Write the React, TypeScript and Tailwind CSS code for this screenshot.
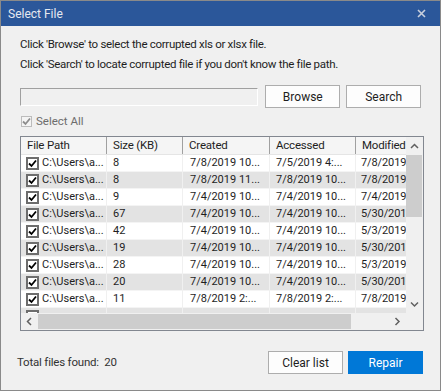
import React from "react"

// "Select File" dialog: instructions, path field, file list with scrollbars.

type Row = { size: string; created: string; accessed: string; modified: string }

const ROWS: Row[] = [
  { size: "8", created: "7/8/2019 10...", accessed: "7/5/2019 4:...", modified: "7/8/2019" },
  { size: "8", created: "7/8/2019 11...", accessed: "7/8/2019 10...", modified: "7/8/2019" },
  { size: "9", created: "7/4/2019 10...", accessed: "7/4/2019 10...", modified: "7/4/2019" },
  { size: "67", created: "7/4/2019 10...", accessed: "7/4/2019 10...", modified: "5/30/201" },
  { size: "42", created: "7/4/2019 10...", accessed: "7/4/2019 10...", modified: "5/3/2019" },
  { size: "19", created: "7/4/2019 10...", accessed: "7/4/2019 10...", modified: "5/30/201" },
  { size: "28", created: "7/4/2019 10...", accessed: "7/4/2019 10...", modified: "5/3/2019" },
  { size: "20", created: "7/4/2019 10...", accessed: "7/4/2019 10...", modified: "5/30/201" },
  { size: "11", created: "7/8/2019 2:...", accessed: "7/8/2019 2:...", modified: "7/8/2019" },
  { size: "", created: "", accessed: "", modified: "" },
]

const COLS = "grid grid-cols-[86px_76px_87px_86px_86px]"

function Check({ color = "#000" }: { color?: string }) {
  return (
    <svg width="9" height="9" viewBox="0 0 9 9">
      <path d="M1 4.5 L3.5 7 L8 1.5" fill="none" stroke={color} strokeWidth="1.8" />
    </svg>
  )
}

function Chevron({ dir }: { dir: "up" | "down" | "left" | "right" }) {
  const d = {
    up: "M1 5 L4.5 1.5 L8 5",
    down: "M1 1.5 L4.5 5 L8 1.5",
    left: "M5 1 L1.5 4.5 L5 8",
    right: "M1.5 1 L5 4.5 L1.5 8",
  }[dir]
  const vertical = dir === "up" || dir === "down"
  return (
    <svg width={vertical ? 9 : 7} height={vertical ? 7 : 9} viewBox={vertical ? "0 0 9 7" : "0 0 7 9"}>
      <path d={d} fill="none" stroke="#606060" strokeWidth="1.5" />
    </svg>
  )
}

export default function App() {
  return (
    <div
      className="flex h-[391px] w-[441px] flex-col border border-[#8a8a8a] bg-[#f0f0f0] text-[11.5px] text-[#1e1e1e]"
      style={{ fontFamily: "Roboto, 'Liberation Sans', sans-serif" }}
    >
      <div className="flex h-[25px] shrink-0 items-center justify-between bg-[#2b579a] pl-[7px] pr-[14px]">
        <span className="text-[12px] text-[#e6e9f0]">Select File</span>
        <svg width="9" height="9" viewBox="0 0 9 9">
          <path d="M1 1 L8 8 M8 1 L1 8" stroke="#c9d0dd" strokeWidth="1.6" />
        </svg>
      </div>

      <div className="flex flex-col px-[19px]">
        <p className="mt-[10px] leading-[16px] tracking-[-0.3px]">Click 'Browse' to select the corrupted xls or xlsx file.</p>
        <p className="mt-[4px] leading-[16px] tracking-[-0.3px]">Click 'Search' to locate corrupted file if you don't know the file path.</p>

        <div className="mt-[13px] flex h-[23px] items-center">
          <div className="h-[18px] w-[239px] border border-b-white border-l-[#a0a0a0] border-r-white border-t-[#a0a0a0] bg-[#f0f0f0]" />
          <button className="ml-[7px] h-[23px] w-[75px] border border-[#adadad] bg-[#fdfdfd] text-[12px]">Browse</button>
          <button className="ml-[6px] h-[23px] w-[75px] border border-[#adadad] bg-[#fdfdfd] text-[12px]">Search</button>
        </div>

        <div className="mt-[6px] flex h-[15px] items-center pl-[1px]">
          <div className="flex h-[11px] w-[11px] items-center justify-center border border-[#bcbcbc] bg-[#f4f4f4]">
            <Check color="#8d8d8d" />
          </div>
          <span className="ml-[4px] text-[#6d6d6d]">Select All</span>
        </div>

        <div className="mt-[7px] flex w-[404px] flex-col border border-[#828790] bg-white">
          <div className="flex h-[176px]">
            <div className="w-[385px] overflow-hidden">
              <div className={`${COLS} h-[18px] w-[421px] border-b border-[#e5e5e5] bg-[#f5f5f5] tracking-[-0.2px]`}>
                {["File Path", "Size (KB)", "Created", "Accessed", "Modified"].map((h) => (
                  <div key={h} className="flex items-center whitespace-nowrap border-r border-[#a0a0a0] pl-[6px] leading-none">
                    {h}
                  </div>
                ))}
              </div>
              {ROWS.map((r, i) => (
                <div
                  key={i}
                  className={`${COLS} h-[17px] w-[421px] border-b border-[#f4f4f4] text-[11px] ${i % 2 ? "bg-[#e3e3e3]" : "bg-white"}`}
                >
                  <div className="flex items-center gap-[3px] overflow-hidden border-r border-[#f0f0f0] pl-[5px]">
                    <div className="flex h-[13px] w-[13px] shrink-0 items-center justify-center border-2 border-[#6d6d6d] bg-white">
                      {r.size ? <Check /> : null}
                    </div>
                    {r.size ? <span className="whitespace-nowrap">C:\Users\a...</span> : null}
                  </div>
                  <div className="flex items-center border-r border-[#f0f0f0] pl-[6px]">{r.size}</div>
                  <div className="flex items-center whitespace-nowrap border-r border-[#f0f0f0] pl-[7px]">{r.created}</div>
                  <div className="flex items-center whitespace-nowrap border-r border-[#f0f0f0] pl-[6px]">{r.accessed}</div>
                  <div className="flex items-center whitespace-nowrap pl-[5px] tracking-[-0.1px]">{r.modified}</div>
                </div>
              ))}
            </div>
            <div className="flex w-[17px] flex-col bg-[#f0f0f0]">
              <div className="flex h-[18px] items-center justify-center">
                <Chevron dir="up" />
              </div>
              <div className="mr-[1px] h-[62px] bg-[#cdcdcd]" />
              <div className="flex-1" />
              <div className="flex h-[17px] items-center justify-center">
                <Chevron dir="down" />
              </div>
            </div>
          </div>
          <div className="flex h-[17px] bg-[#f0f0f0]">
            <div className="flex h-full w-[17px] items-center justify-center">
              <Chevron dir="left" />
            </div>
            <div className="mt-[1px] h-[15px] w-[313px] bg-[#cdcdcd]" />
            <div className="flex-1" />
            <div className="flex h-full w-[17px] items-center justify-center">
              <Chevron dir="right" />
            </div>
            <div className="w-[17px]" />
          </div>
        </div>
      </div>

      <div className="mt-[20px] flex h-[23px] items-center pl-[16px] pr-[17px]">
        <span className="tracking-[-0.2px] text-[#333]">Total files found:&nbsp;&nbsp;20</span>
        <div className="flex-1" />
        <button className="h-[23px] w-[75px] border border-[#adadad] bg-[#fdfdfd] text-[12px]">Clear list</button>
        <button className="ml-[5px] h-[23px] w-[75px] border border-[#0078d7] bg-[#0078d7] text-[12px] text-white">Repair</button>
      </div>
    </div>
  )
}
